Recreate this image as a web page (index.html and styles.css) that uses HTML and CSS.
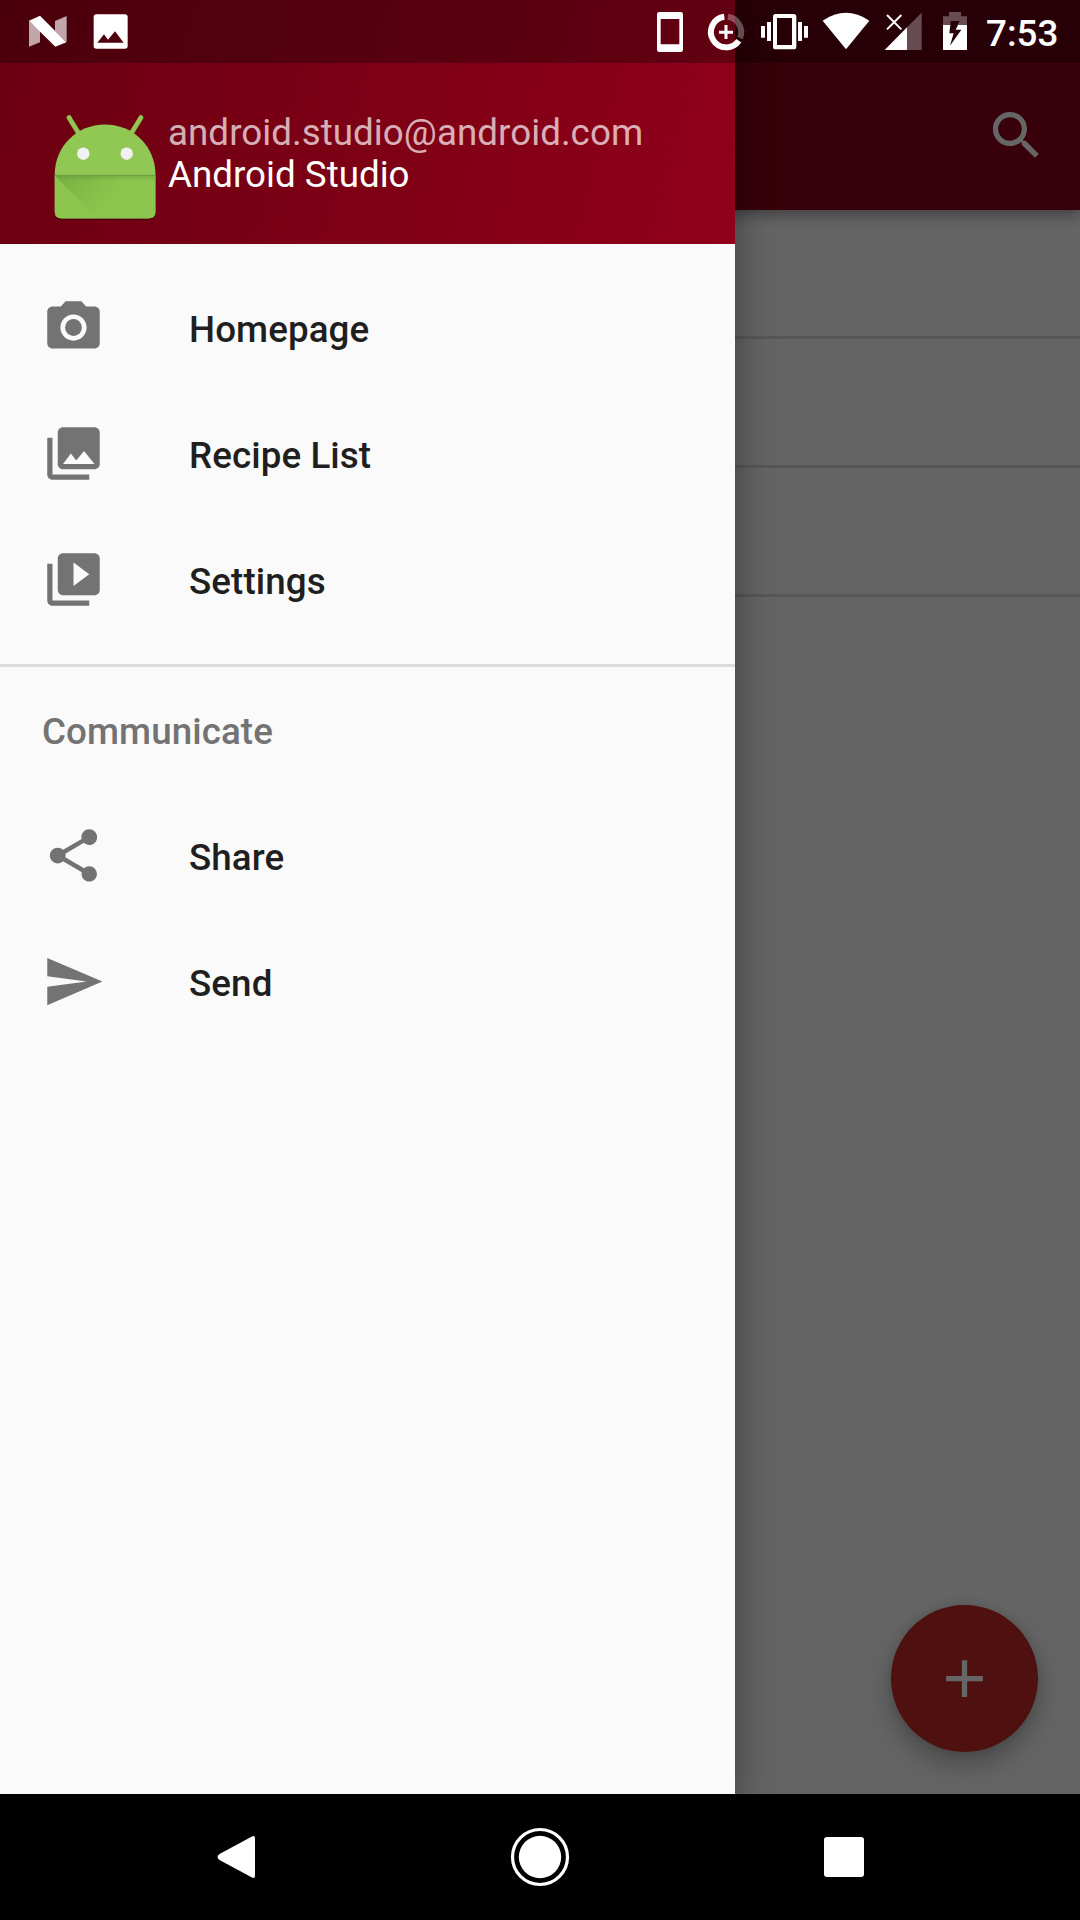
FILE: index.html
```html
<!DOCTYPE html>
<html lang="en">
<head>
<meta charset="utf-8">
<title>Recipes</title>
<link rel="stylesheet" href="styles.css">
</head>
<body>
<div class="screen">
  <div class="window">
    <main class="app">
      <header class="toolbar">
        <svg class="icon" viewBox="0 0 24 24"><path d="M15.5 14h-.79l-.28-.27C15.41 12.59 16 11.11 16 9.500 16 5.910 13.090 3 9.500 3S3 5.910 3 9.500 5.910 16 9.500 16c1.610 0 3.090-.59 4.230-1.570l.27.28v.79l5 4.990L20.490 19l-4.990-5zm-6 0C7.010 14 5 11.990 5 9.500S7.010 5 9.500 5 14 7.010 14 9.500 11.990 14 9.500 14z"/></svg>
      </header>
      <div class="list">
        <div class="list-row"></div>
        <div class="list-row"></div>
        <div class="list-row"></div>
      </div>
      <button class="fab" aria-label="Add">
        <svg class="icon" viewBox="0 0 24 24"><path d="M19 13h-6v6h-2v-6H5v-2h6V5h2v6h6v2z"/></svg>
      </button>
      <div class="scrim"></div>
    </main>

    <aside class="drawer">
      <header class="profile">
        <svg class="avatar" viewBox="42 104 126 126">
          <defs>
            <linearGradient id="fold" x1="0" y1="0" x2="1" y2="0.35">
              <stop offset="0" stop-color="#33691e" stop-opacity=".22"/>
              <stop offset=".65" stop-color="#33691e" stop-opacity="0"/>
            </linearGradient>
            <linearGradient id="edge" x1="0" y1="0" x2="0" y2="1">
              <stop offset="0" stop-color="#33691e" stop-opacity=".2"/>
              <stop offset="1" stop-color="#33691e" stop-opacity="0"/>
            </linearGradient>
          </defs>
          <path d="M55 214q0 6 7 6h86q7 0 7-6" fill="#3c000a" opacity=".7"/>
          <path d="M69 117.500L78.500 133M141 117.500L131.500 133" stroke="#8fc750" stroke-width="4.800" stroke-linecap="round"/>
          <path d="M54.700 175C54.700 146 77 124.500 105 124.500S155.500 146 155.500 175v36.500q0 7-7 7H61.700q-7 0-7-7z" fill="#90c853"/>
          <path d="M54.700 175.500h100.800v36q0 7-7 7H61.700q-7 0-7-7z" fill="#8bc34a" opacity=".6"/>
          <path d="M54.700 175.500L97.700 218.500H140L155.500 175.500z" fill="url(#fold)"/>
          <path d="M54.700 175.500h100.800v6H60.700z" fill="url(#edge)"/>
          <path d="M54.700 175.300h100.800" stroke="#6d9b3c" stroke-width="1"/>
          <circle cx="83.300" cy="153.700" r="6.200" fill="#f1f1f1"/>
          <circle cx="126.700" cy="153.700" r="6.200" fill="#f1f1f1"/>
        </svg>
        <div class="account">
          <div class="email">android.studio@android.com</div>
          <div class="name">Android Studio</div>
        </div>
      </header>
      <nav class="menu">
        <a class="item">
          <svg class="icon" viewBox="0 0 24 24"><circle cx="12" cy="12" r="3.200"/><path d="M9 2L7.170 4H4c-1.100 0-2 .9-2 2v12c0 1.100.9 2 2 2h16c1.100 0 2-.9 2-2V6c0-1.100-.9-2-2-2h-3.170L15 2H9zm3 15c-2.760 0-5-2.240-5-5s2.240-5 5-5 5 2.240 5 5-2.240 5-5 5z"/></svg>
          <span>Homepage</span>
        </a>
        <a class="item">
          <svg class="icon" viewBox="0 0 24 24"><path d="M22 16V4c0-1.100-.9-2-2-2H8c-1.100 0-2 .9-2 2v12c0 1.100.9 2 2 2h12c1.100 0 2-.9 2-2zm-11-4l2.030 2.710L16 11l4 5H8l3-4zM2 6v14c0 1.100.9 2 2 2h14v-2H4V6H2z"/></svg>
          <span>Recipe List</span>
        </a>
        <a class="item">
          <svg class="icon" viewBox="0 0 24 24"><path d="M4 6H2v14c0 1.100.9 2 2 2h14v-2H4V6zm16-4H8c-1.100 0-2 .9-2 2v12c0 1.100.9 2 2 2h12c1.100 0 2-.9 2-2V4c0-1.100-.9-2-2-2zm-8 12.500v-9l6 4.500-6 4.500z"/></svg>
          <span>Settings</span>
        </a>
      </nav>
      <h2 class="subheader">Communicate</h2>
      <nav>
        <a class="item">
          <svg class="icon" viewBox="0 0 24 24"><path d="M18 16.080c-.76 0-1.440.3-1.960.77L8.910 12.700c.05-.23.09-.46.09-.7s-.04-.47-.09-.7l7.050-4.110c.54.5 1.250.81 2.040.81 1.660 0 3-1.340 3-3s-1.340-3-3-3-3 1.340-3 3c0 .24.04.47.09.7L8.040 9.810C7.500 9.310 6.790 9 6 9c-1.660 0-3 1.340-3 3s1.340 3 3 3c.79 0 1.500-.31 2.040-.81l7.120 4.160c-.05.21-.08.43-.08.65 0 1.610 1.310 2.920 2.920 2.920s2.920-1.310 2.920-2.920-1.310-2.920-2.920-2.920z"/></svg>
          <span>Share</span>
        </a>
        <a class="item">
          <svg class="icon" viewBox="0 0 24 24"><path d="M2.010 21L23 12 2.010 3v7l15 2-15 2z"/></svg>
          <span>Send</span>
        </a>
      </nav>
    </aside>

    <div class="status-bar">
      <div class="status-group">
        <svg width="80" height="63" viewBox="0 0 240 189">
          <path d="M87 62L120 92V127L87 140zM165 63L200 48V127L165 93z" opacity=".65"/>
          <path d="M87 62L120 47 199 127 166 140z"/>
        </svg>
        <svg width="60" height="63" viewBox="240 0 180 189"><path fill-rule="evenodd" d="M289 43h86q8 0 8 8v87q0 8-8 8h-86q-8 0-8-8V51q0-8 8-8zM292 128h79L345 94 324 119 312 103z"/></svg>
      </div>
      <div class="status-group">
        <svg width="45" height="63" viewBox="45 0 135 189"><path fill-rule="evenodd" d="M58 36h64q7 0 7 7v106q0 7-7 7H58q-7 0-7-7V43q0-7 7-7zM62 57v76h56V57z"/></svg>
        <svg width="53" height="63" viewBox="180 0 159 189">
          <g fill="none" stroke="#fff">
            <path d="M253 50.500A46 46 0 1 0 296.500 122.500" stroke-width="18"/>
            <path d="M263.500 50.500A46 46 0 0 1 300 114" stroke-width="18" opacity=".3"/>
            <path d="M237 96.500h42M258 75v42" stroke-width="9"/>
          </g>
        </svg>
        <svg width="63" height="63" viewBox="339 0 189 189"><path fill-rule="evenodd" d="M407 42h54q8 0 8 8v90q0 8-8 8h-54q-8 0-8-8V50q0-8 8-8zM411 54v81h45V54zM381 66h12v57h-12zM363 78h12v35h-12zM474 66h12v57h-12zM492 78h12v35h-12z"/></svg>
        <svg width="61" height="63" viewBox="528 0 183 189"><path d="M548 62Q618 15 688 62L618 148z"/></svg>
        <svg width="55" height="63" viewBox="711 0 165 189">
          <path d="M801 82L845 38V150H801z" opacity=".3"/>
          <path d="M734 150L801 82V150z"/>
          <path d="M741 45L784 88M784 45L741 88" stroke="#fff" stroke-width="6"/>
        </svg>
        <svg width="46" height="63" viewBox="876 0 138 189">
          <path fill-rule="evenodd" d="M909 75V49h18V36h36v13h18v26H952L959 63H932L931 75z" opacity=".3"/>
          <path fill-rule="evenodd" d="M909 75h22L928 100H941L930 137 964 89H947L954 75h27v75h-72z"/>
        </svg>
        <time class="clock">7:53</time>
      </div>
    </div>
  </div>

  <footer class="nav-bar">
    <svg width="60" height="60" viewBox="0 0 60 60"><path d="M13.500 27L46 9.500q3-1.500 3 2v37q0 3.500-3 2L13.500 33q-4-3 0-6z"/></svg>
    <svg width="60" height="60" viewBox="0 0 60 60"><circle cx="30" cy="30" r="21.200"/><circle cx="30" cy="30" r="27.500" fill="none" stroke="#fff" stroke-width="3.200"/></svg>
    <svg width="60" height="60" viewBox="0 0 60 60"><rect x="10" y="10" width="40" height="40" rx="3"/></svg>
  </footer>
</div>
</body>
</html>
```
FILE: styles.css
```css
* {
  box-sizing: border-box;
}

body {
  margin: 0;
  font-family: Roboto, "Liberation Sans", sans-serif;
  font-size: 36.75px;
}

svg {
  display: block;
  flex: none;
}

.screen {
  display: grid;
  grid-template-rows: 1fr 126px;
  width: 1080px;
  height: 1920px;
  overflow: hidden;
}

.window {
  position: relative;
  display: grid;
  overflow: hidden;
}

.icon {
  width: 63px;
  height: 63px;
  fill: currentColor;
}

/* Screen behind the drawer */
.app {
  position: relative;
  display: flex;
  flex-direction: column;
  background: #fafafa;
}

.toolbar {
  position: relative;
  display: flex;
  justify-content: flex-end;
  align-items: center;
  height: 210px;
  padding: 61px 32px 0 0;
  background: #8b0019;
  color: #fff;
  box-shadow: 0 4px 14px rgba(0, 0, 0, 0.4);
}

.list-row {
  height: 129px;
  border-bottom: 3px solid #dadada;
}

.fab {
  display: grid;
  place-items: center;
  width: 147px;
  height: 147px;
  margin: auto 42px 42px auto;
  padding: 0;
  border: 0;
  border-radius: 50%;
  background: #c62828;
  color: #fff;
  box-shadow: 0 12px 26px rgba(0, 0, 0, 0.28), 0 0 10px rgba(0, 0, 0, 0.1);
}

.scrim {
  position: absolute;
  inset: 0;
  background: rgba(0, 0, 0, 0.6);
}

/* Navigation drawer */
.drawer {
  position: absolute;
  inset: 0 auto 0 0;
  width: 735px;
  background: #fafafa;
  box-shadow: 0 10px 36px rgba(0, 0, 0, 0.4);
}

.profile {
  display: flex;
  height: 244px;
  padding: 104px 42px 0;
  background: linear-gradient(105deg, #6b0011, #7d0015 50%, #900019);
  color: #fff;
}

.avatar {
  width: 126px;
  height: 126px;
}

.account {
  padding-top: 8px;
  line-height: 42px;
}

.email {
  color: rgba(255, 255, 255, 0.7);
  letter-spacing: 0.04px;
}

.menu {
  padding: 20px 0 22px;
  border-bottom: 3px solid #dcdcdc;
}

.item {
  display: flex;
  align-items: center;
  gap: 84px;
  height: 126px;
  padding-left: 42px;
  color: #737373;
  font-weight: 500;
}

.item span {
  padding-top: 4px;
  color: #1f1f1f;
  letter-spacing: 0.08px;
}

.subheader {
  height: 125px;
  margin: 0;
  padding: 2px 0 0 42px;
  color: #737373;
  font-size: inherit;
  font-weight: 500;
  line-height: 125px;
  letter-spacing: 0.08px;
}

/* System bars */
.status-bar {
  position: absolute;
  inset: 0 0 auto;
  display: flex;
  justify-content: space-between;
  height: 63px;
  background: rgba(0, 0, 0, 0.3);
  color: #fff;
  fill: #fff;
}

.status-group {
  display: flex;
}

.status-group + .status-group {
  width: 425px;
}

.clock {
  padding-left: 8px;
  font-weight: 500;
  line-height: 67px;
}

.nav-bar {
  display: flex;
  justify-content: space-between;
  align-items: center;
  padding: 0 206px;
  background: #000;
  fill: #fff;
}
```
